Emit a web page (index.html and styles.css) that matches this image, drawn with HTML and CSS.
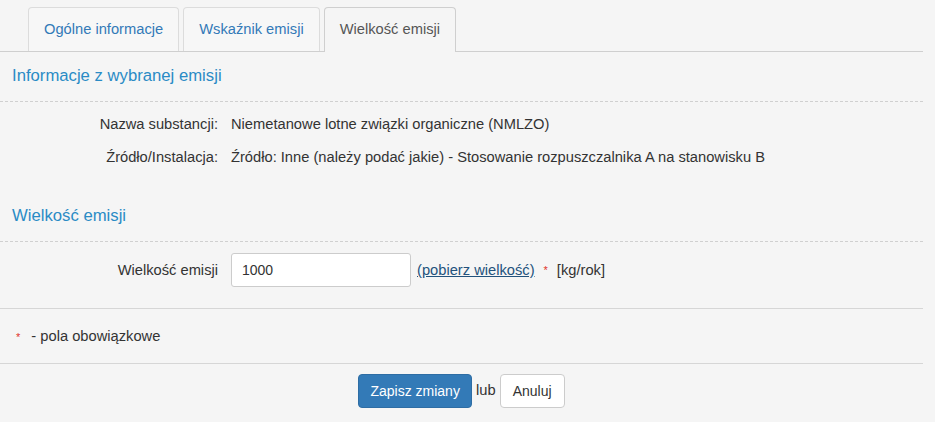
FILE: index.html
```html
<!DOCTYPE html>
<html lang="pl">
<head>
<meta charset="utf-8">
<title>Wielkość emisji</title>
<link rel="stylesheet" href="styles.css">
</head>
<body>
<div class="page">
  <ul class="tabs">
    <li class="tab"><a href="#">Ogólne informacje</a></li>
    <li class="tab"><a href="#">Wskaźnik emisji</a></li>
    <li class="tab active"><a href="#">Wielkość emisji</a></li>
  </ul>

  <h3 class="section-title">Informacje z wybranej emisji</h3>
  <div class="info">
    <div class="row">
      <div class="label">Nazwa substancji:</div>
      <div class="value">Niemetanowe lotne związki organiczne (NMLZO)</div>
    </div>
    <div class="row">
      <div class="label">Źródło/Instalacja:</div>
      <div class="value">Źródło: Inne (należy podać jakie) - Stosowanie rozpuszczalnika A na stanowisku B</div>
    </div>
  </div>

  <h3 class="section-title second">Wielkość emisji</h3>
  <div class="form-row">
    <label class="label" for="wielkosc">Wielkość emisji</label>
    <div class="field">
      <input id="wielkosc" class="input" type="text" value="1000">
      <a class="fetch" href="#">(pobierz wielkość)</a>
      <span class="req">*</span>
      <span class="unit">[kg/rok]</span>
    </div>
  </div>

  <div class="note"><span class="req">*</span> - pola obowiązkowe</div>

  <div class="actions">
    <button class="btn btn-primary" type="button">Zapisz zmiany</button> lub <button class="btn btn-default" type="button">Anuluj</button>
  </div>
</div>
</body>
</html>
```

FILE: styles.css
```css
html, body {
  margin: 0;
  padding: 0;
  background: #f5f5f5;
}
body {
  font-family: "Liberation Sans", Arial, Helvetica, sans-serif;
  font-size: 14.7px;
  line-height: 20px;
  color: #333;
}
.page {
  width: 923px;
}
.tabs {
  list-style: none;
  margin: 0;
  padding: 7px 0 0 28px;
  display: flex;
  gap: 4px;
  border-bottom: 1px solid #cfcfcf;
  height: 44px;
}
.tab {
  margin-bottom: -1px;
}
.tab a {
  display: block;
  padding: 11px 15px 12px;
  border: 1px solid #dcdcdc;
  border-bottom: none;
  border-radius: 4px 4px 0 0;
  background: #f7f7f7;
  color: #337ab7;
  text-decoration: none;
}
.tab.active a {
  color: #555;
  background: #f5f5f5;
  border-color: #cfcfcf;
  padding-bottom: 13px;
}
.section-title {
  margin: 0;
  padding: 13px 0 14px 12px;
  font-size: 16.7px;
  font-weight: normal;
  line-height: 22px;
  color: #2a8bc5;
  border-bottom: 1px dashed #d0d0d0;
}
.section-title.second {
  margin-top: 25px;
}
.info {
  display: flex;
  flex-direction: column;
  gap: 13px;
  padding-top: 12px;
}
.row, .form-row {
  display: grid;
  grid-template-columns: 218px 1fr;
  column-gap: 13px;
  align-items: center;
}
.label {
  text-align: right;
}
.form-row {
  padding: 11px 0 21px;
  border-bottom: 1px solid #d6d6d6;
}
.field {
  display: flex;
  align-items: center;
}
.input {
  width: 180px;
  height: 34px;
  box-sizing: border-box;
  padding: 6px 10px;
  border: 1px solid #ccc;
  border-radius: 3px;
  background: #fff;
  font-family: inherit;
  font-size: 14px;
  color: #333;
  margin: 0 6px 0 0;
}
.fetch {
  color: #23527c;
  text-decoration: underline;
}
.req {
  color: #e0332c;
  font-size: 11px;
  margin: 0 9px;
}
.note {
  padding: 17px 0 16px 16px;
  border-bottom: 1px solid #d6d6d6;
}
.note .req {
  margin: 0 7px 0 0;
}
.actions {
  padding-top: 10px;
  text-align: center;
}
.btn {
  display: inline-block;
  height: 34px;
  box-sizing: border-box;
  padding: 6px 12px;
  border: 1px solid #ccc;
  border-radius: 4px;
  font-family: inherit;
  font-size: 14px;
  line-height: 20px;
  vertical-align: middle;
  cursor: pointer;
}
.btn-primary {
  background: #337ab7;
  border-color: #2e6da4;
  color: #fff;
  padding: 6px 11px;
}
.btn-default {
  background: #fff;
  color: #333;
}
```
